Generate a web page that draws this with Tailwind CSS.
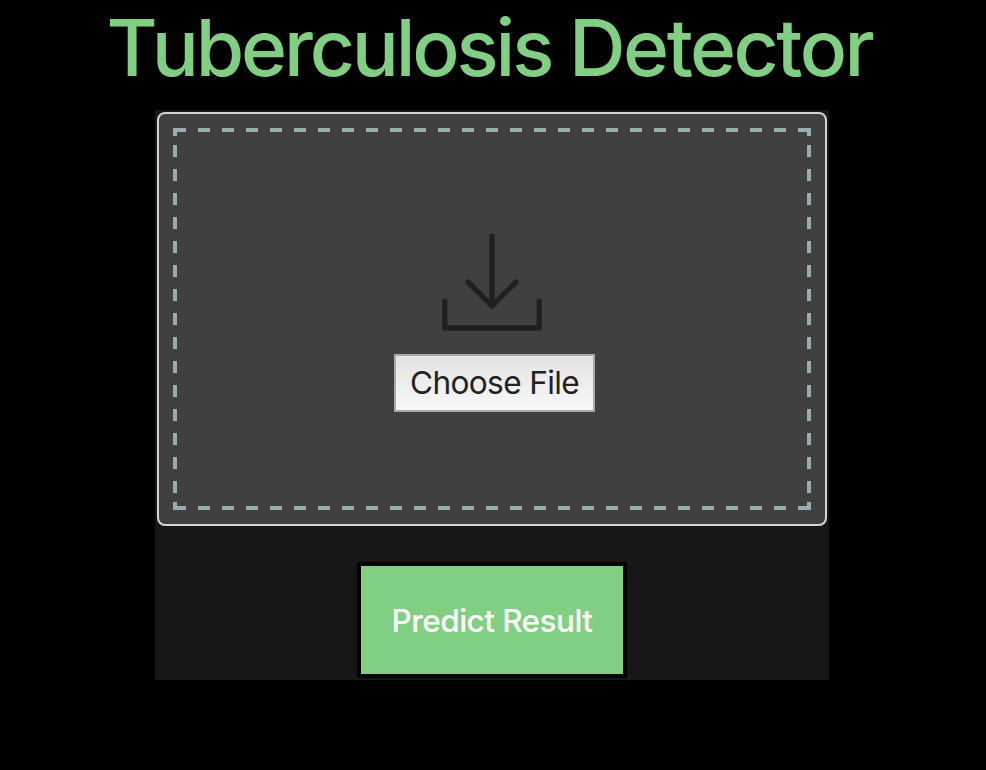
<!DOCTYPE html>
<html lang="en">
<head>
<meta charset="utf-8">
<title>Tuberculosis Detector</title>
<script src="https://cdn.jsdelivr.net/npm/@tailwindcss/browser@4"></script>
</head>
<body class="bg-black min-h-screen overflow-hidden font-['Inter','Liberation_Sans',sans-serif]">
<main class="flex flex-col items-center w-[984px]">
  <h1 class="h-[110px] mr-[5px] text-[78.4px] leading-[96px] font-[540] tracking-[-3.15px] whitespace-nowrap text-[#80cf82]"><span class="tracking-[-6px]">T</span>uberculosis <span class="tracking-[-2.5px]">Detector</span></h1>
  <section class="w-[674px] h-[570px] bg-[#171717] p-[2px] flex flex-col items-center">
    <div class="w-full h-[414px] shrink-0 rounded-[8px] border-2 border-[#d0d5d8] bg-[#404040] p-[14px]">
      <div class="relative w-[638px] h-[382px] flex flex-col items-center">
        <svg class="absolute inset-0" width="638" height="382" fill="none" stroke="#98afb2" stroke-width="4">
          <path d="M1 2H637M1 380H637" stroke-dasharray="12 12"/>
          <path d="M2 17V365M636 17V365" stroke-dasharray="12 12"/>
          <path d="M8 2H2V8M630 2H636V8M8 380H2V374M630 380H636V374" stroke-linecap="butt"/>
        </svg>
        <svg class="mt-[102px] shrink-0" width="104" height="104" viewBox="0 0 104 104" fill="none" stroke="#1f211e" stroke-width="5.4" stroke-linecap="round" stroke-linejoin="round">
          <path d="M52 6V76M28 52L52 76L76 52M4.7 71.5V98H99.3V71.5"/>
        </svg>
        <button class="mt-[20px] ml-[5px] w-[201px] h-[58px] border-2 border-[#a9a9a9] bg-linear-to-b from-[#e3e3e3] to-[#f8f8f8] text-[31.6px] leading-[54px] tracking-[-0.65px] text-[#222] whitespace-nowrap">Choose File</button>
      </div>
    </div>
    <button class="mt-[36px] w-[270px] h-[116px] shrink-0 border-4 border-black bg-[#80cf82] text-[31.5px] leading-[109px] font-medium tracking-[-0.55px] text-white whitespace-nowrap">Predict Result</button>
  </section>
</main>
</body>
</html>
